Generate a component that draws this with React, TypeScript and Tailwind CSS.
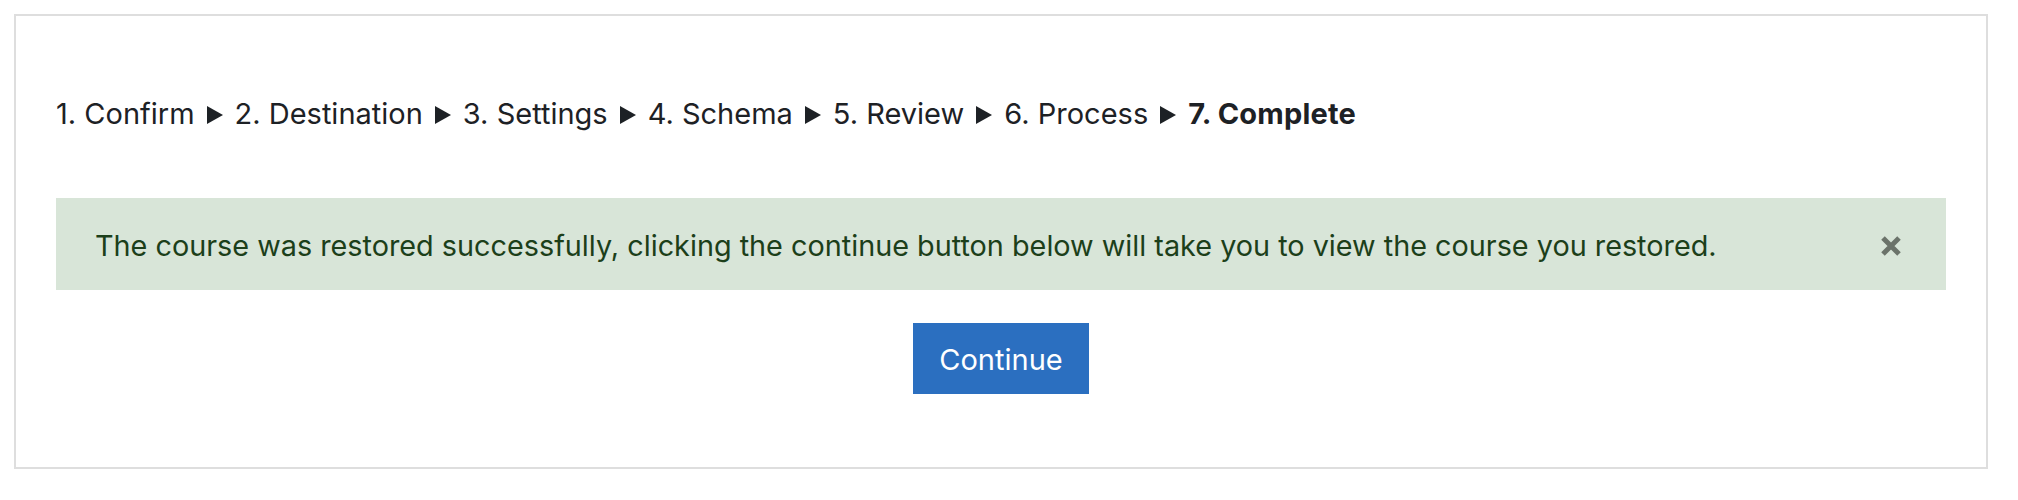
import React from "react"

const steps = ["1. Confirm", "2. Destination", "3. Settings", "4. Schema", "5. Review", "6. Process"]

function Arrow() {
  return (
    <svg width="16" height="18" viewBox="0 0 16 18" className="inline-block align-baseline mx-[12px]">
      <path d="M0 0 L16 9 L0 18 Z" fill="#1d2125" />
    </svg>
  )
}

export default function App() {
  return (
    <div className="bg-white pt-[14px] pl-[14px] pr-[30px] pb-[14px]" style={{ fontFamily: "Inter, 'Noto Sans', sans-serif" }}>
      <div className="border-2 border-[#dedede] px-[40px] pt-[76px] pb-[73px]">
        {/* step trail */}
        <div className="text-[29px] leading-[1.5] text-[#1d2125]">
          {steps.map((s) => (
            <span key={s}>
              {s}
              <Arrow />
            </span>
          ))}
          <span className="font-bold tracking-[0.2px]">7. Complete</span>
        </div>

        {/* success notice */}
        <div className="mt-[62px] bg-[#d8e5d8] text-[#1c3f1a] px-[39px] pt-[26px] pb-[22px] flex items-center justify-between">
          <p className="text-[28.8px] leading-[44px]">
            The course was restored successfully, clicking the continue button below will take you to view the course you restored.
          </p>
          <button className="mr-[5px]" aria-label="Close">
            <svg width="22" height="22" viewBox="0 0 22 22">
              <path d="M3 3 L19 19 M19 3 L3 19" stroke="#6b736a" strokeWidth="5" />
            </svg>
          </button>
        </div>

        <div className="mt-[33px] flex justify-center">
          <button className="bg-[#2b6fc0] text-white text-[29px] leading-[1.5] px-[26px] pt-[15px] pb-[13px]">
            Continue
          </button>
        </div>
      </div>
    </div>
  )
}
